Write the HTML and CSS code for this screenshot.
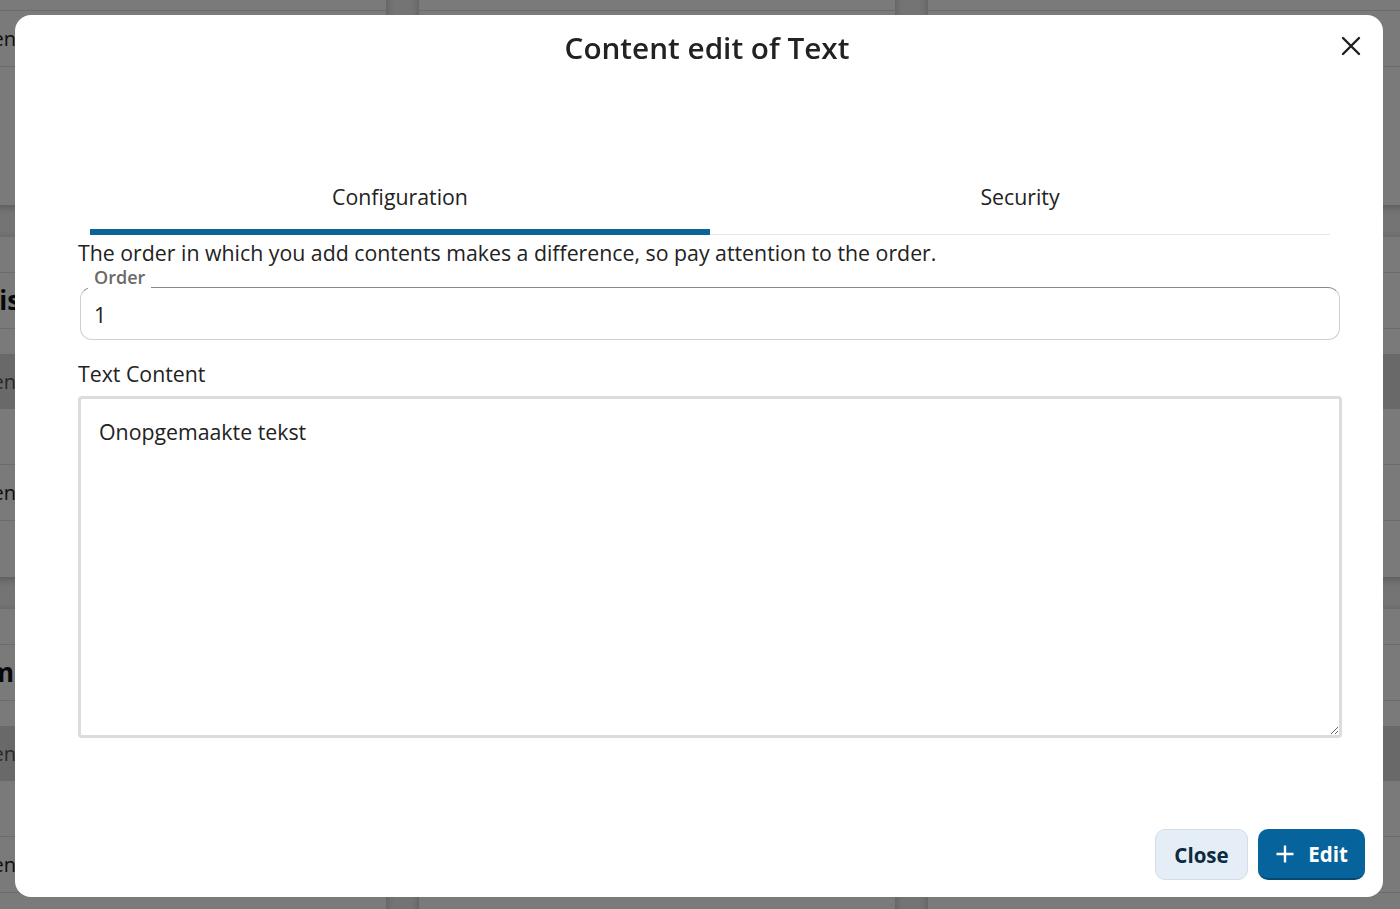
FILE: index.html
```html
<!DOCTYPE html>
<html lang="en">
<head>
    <meta charset="UTF-8">
    <meta name="viewport" content="width=device-width, initial-scale=1.0">
    <title>Content edit of Text</title>
    <link rel="stylesheet" href="styles.css">
</head>
<body>

    <!-- page behind the dialog -->
    <div class="page">
        <div class="column col-left">
            <div class="card card-top">
                <div class="card-head">Center</div>
                <div class="card-row">Filter</div>
                <div class="card-row">Center</div>
            </div>
            <div class="card">
                <div class="card-title">Display</div>
                <div class="card-head">Center</div>
                <div class="card-row"></div>
                <div class="card-row">Center</div>
            </div>
            <div class="card">
                <div class="card-title">Images</div>
                <div class="card-head">Center</div>
                <div class="card-row"></div>
                <div class="card-row">Center</div>
            </div>
        </div>
        <div class="column">
            <div class="card card-top">
                <div class="card-head"></div>
                <div class="card-row"></div>
                <div class="card-row"></div>
            </div>
            <div class="card">
                <div class="card-title"></div>
                <div class="card-head"></div>
                <div class="card-row"></div>
                <div class="card-row"></div>
            </div>
            <div class="card">
                <div class="card-title"></div>
                <div class="card-head"></div>
                <div class="card-row"></div>
                <div class="card-row"></div>
            </div>
        </div>
        <div class="column">
            <div class="card card-top">
                <div class="card-head"></div>
                <div class="card-row"></div>
                <div class="card-row"></div>
            </div>
            <div class="card">
                <div class="card-title"></div>
                <div class="card-head"></div>
                <div class="card-row"></div>
                <div class="card-row"></div>
            </div>
            <div class="card">
                <div class="card-title"></div>
                <div class="card-head"></div>
                <div class="card-row"></div>
                <div class="card-row"></div>
            </div>
        </div>
    </div>

    <div class="overlay"></div>

    <!-- dialog -->
    <div class="modal">
        <div class="modal-header">
            <h1 class="modal-title">Content edit of Text</h1>
            <button class="close-x" aria-label="Close">
                <svg width="20" height="20" viewBox="0 0 20 20">
                    <path d="M2 2 L18 18 M18 2 L2 18" stroke="#1f1f1f" stroke-width="2.4" stroke-linecap="round" fill="none"/>
                </svg>
            </button>
        </div>

        <div class="modal-body">
            <div class="tabs">
                <div class="tab active">Configuration</div>
                <div class="tab">Security</div>
            </div>

            <p class="hint">The order in which you add contents makes a difference, so pay attention to the order.</p>

            <div class="field">
                <span class="field-label">Order</span>
                <div class="field-value">1</div>
            </div>

            <label class="text-label" for="text-content">Text Content</label>
            <textarea id="text-content" class="text-area">Onopgemaakte tekst</textarea>
        </div>

        <div class="modal-footer">
            <button class="btn btn-light">Close</button>
            <button class="btn btn-primary">
                <svg width="20" height="20" viewBox="0 0 20 20">
                    <path d="M10 1.5 V18.5 M1.5 10 H18.5" stroke="#ffffff" stroke-width="2.4" fill="none"/>
                </svg>
                Edit
            </button>
        </div>
    </div>

</body>
</html>
```

FILE: styles.css
```css
body {
    margin: 0;
    font-family: "Open Sans", "Noto Sans", sans-serif;
    background-color: #f3f3f3;
    color: #222222;
    overflow: hidden;
    height: 909px;
}

/* background page */

.page {
    display: grid;
    grid-template-columns: 406px 476px 490px;
    column-gap: 33px;
    margin-left: -20px;
    margin-top: -135px;
}

.column {
    display: flex;
    flex-direction: column;
    gap: 32px;
}

.card {
    background-color: #ffffff;
    border-radius: 6px;
    box-shadow: 0 2px 8px rgba(0, 0, 0, 0.25);
    padding-top: 35px;
    height: 305px;
    font-size: 20px;
}

.card-title {
    height: 55px;
    line-height: 55px;
    border-top: 1px solid #e0e0e0;
    border-bottom: 1px solid #e0e0e0;
    margin-bottom: 25px;
    font-weight: 700;
    font-size: 26px;
    color: #111;
}

.col-left .card-title,
.col-left .card-head,
.col-left .card-row {
    text-align: right;
    padding-right: 364px;
}

.card-head {
    height: 55px;
    line-height: 55px;
    background-color: #dcdcdc;
    color: #555;
}

.card-row {
    height: 55px;
    line-height: 55px;
    border-bottom: 1px solid #e0e0e0;
    color: #222;
}

.overlay {
    position: fixed;
    inset: 0;
    background-color: rgba(0, 0, 0, 0.52);
}

/* dialog */

.modal {
    position: fixed;
    top: 15px;
    left: 15px;
    right: 17px;
    bottom: 12px;
    background-color: #ffffff;
    border-radius: 16px;
    display: flex;
    flex-direction: column;
}

.modal-header {
    position: relative;
    padding: 13px 0 0 16px;
    text-align: center;
}

.modal-title {
    margin: 0;
    font-size: 29.7px;
    font-weight: 600;
    line-height: 40px;
    color: #222222;
}

.close-x {
    position: absolute;
    top: 21px;
    right: 22px;
    border: none;
    background: none;
    padding: 0;
    cursor: pointer;
}

.modal-body {
    flex: 1;
    padding: 0 41px 0 63px;
}

.tabs {
    display: flex;
    margin: 101px 12px 0;
    border-bottom: 1px solid #e8e8e8;
}

.tab {
    flex: 1;
    text-align: center;
    font-size: 21.3px;
    height: 60px;
    line-height: 56px;
    color: #222;
    border-bottom: 6px solid transparent;
    margin-bottom: -1px;
}

.tab.active {
    border-bottom-color: #0a6496;
}

.hint {
    margin: 4px 0 0;
    font-size: 21.3px;
    line-height: 28px;
}

.field {
    position: relative;
    margin: 20px 2px 0 2px;
    height: 51px;
    border: 1px solid #cfcfcf;
    border-top-color: #8a8a8a;
    border-radius: 12px;
}

.field-label {
    position: absolute;
    top: -20px;
    left: 7px;
    padding: 0 6px 3px;
    background-color: #ffffff;
    font-size: 18px;
    font-weight: 600;
    line-height: 18px;
    color: #6a6a6a;
}

.field-value {
    padding-left: 13px;
    font-size: 21.3px;
    line-height: 53px;
}

.text-label {
    display: block;
    margin-top: 20px;
    font-size: 21.3px;
    line-height: 28px;
}

.text-area {
    display: block;
    box-sizing: border-box;
    width: 100%;
    height: 342px;
    margin-top: 8px;
    padding: 18px 18px;
    border: 3px solid #dcdcdc;
    border-radius: 4px;
    font-family: "Open Sans", "Noto Sans", sans-serif;
    font-size: 21.3px;
    line-height: 30px;
    color: #222;
    outline: none;
}

.modal-footer {
    display: flex;
    justify-content: flex-end;
    gap: 10px;
    padding: 0 18px 17px 0;
}

.btn {
    height: 51px;
    border-radius: 10px;
    font-family: "Open Sans", "Noto Sans", sans-serif;
    font-size: 20.5px;
    font-weight: 700;
    display: flex;
    align-items: center;
    justify-content: center;
    gap: 13px;
    cursor: pointer;
}

.btn-light {
    width: 93px;
    background-color: #e5eef6;
    border: 1px solid #d3dde6;
    color: #0c2a40;
}

.btn-primary {
    width: 107px;
    background-color: #07639b;
    border: none;
    border-bottom: 2px solid #054a73;
    color: #ffffff;
}
```
